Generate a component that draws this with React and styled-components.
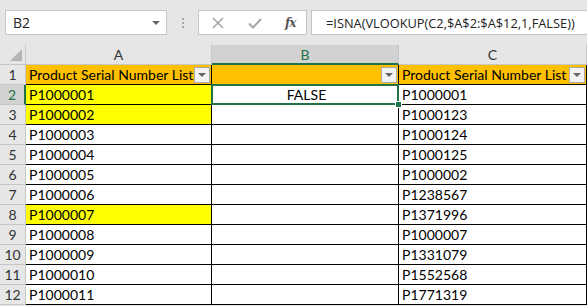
import React from 'react';
import styled, { createGlobalStyle } from 'styled-components';

const Global = createGlobalStyle`
  html, body { margin: 0; padding: 0; background: #e6e6e6; }
  body { width: 587px; height: 306px; overflow: hidden; }
`;

const Page = styled.div`
  width: 587px;
  height: 306px;
  overflow: hidden;
  background: #e6e6e6;
  font-family: Lato, "Liberation Sans", sans-serif;
`;

const FormulaBar = styled.div`
  display: flex;
  align-items: center;
  height: 25px;
  padding: 10px 0 10px 5px;
`;

const NameBox = styled.div`
  box-sizing: border-box;
  flex-shrink: 0;
  width: 162px;
  height: 25px;
  background: #fff;
  border: 1px solid #c6c6c6;
  display: flex;
  align-items: center;
  justify-content: space-between;
  padding: 0 6px 0 7px;
  font-family: "Open Sans", sans-serif;
  font-size: 14px;
  color: #222;
`;

const Caret = styled.span`
  width: 0;
  height: 0;
  border-left: 4px solid transparent;
  border-right: 4px solid transparent;
  border-top: 4px solid #666;
`;

const Grip = styled.div`
  flex-shrink: 0;
  width: 31px;
  display: flex;
  flex-direction: column;
  align-items: center;
  gap: 2px;
  span {
    width: 2px;
    height: 2px;
    background: #a8a8a8;
  }
`;

const IconBox = styled.div`
  box-sizing: border-box;
  flex-shrink: 0;
  width: 109px;
  height: 25px;
  background: #fff;
  border: 1px solid #c6c6c6;
  display: flex;
  align-items: center;
  padding-left: 12px;
  gap: 22px;
`;

const Fx = styled.span`
  font-family: "DejaVu Serif", "Liberation Serif", serif;
  font-style: italic;
  font-weight: bold;
  font-size: 12px;
  color: #555;
  letter-spacing: -1px;
`;

const FormulaInput = styled.div`
  box-sizing: border-box;
  flex: 1;
  min-width: 0;
  margin-left: 4px;
  height: 25px;
  background: #fff;
  border: 1px solid #c6c6c6;
  border-right: none;
  display: flex;
  align-items: center;
  padding-left: 14px;
  font-family: "Open Sans", sans-serif;
  font-size: 12.8px;
  color: #222;
  white-space: nowrap;
  overflow: hidden;
`;

const Sheet = styled.div`
  display: grid;
  grid-template-columns: 26px 186px 187px 188px;
  grid-auto-rows: 20px;
`;

const Corner = styled.div`
  box-sizing: border-box;
  background: #e6e6e6;
  border-right: 1px solid #c6c6c6;
  border-bottom: 1px solid #c6c6c6;
  position: relative;
  &::after {
    content: '';
    position: absolute;
    right: 3px;
    bottom: 3px;
    width: 0;
    height: 0;
    border-left: 12px solid transparent;
    border-bottom: 12px solid #b4b4b4;
  }
`;

const ColHead = styled.div`
  box-sizing: border-box;
  display: flex;
  align-items: center;
  justify-content: center;
  background: ${p => (p.$active ? '#d2d2d2' : '#e6e6e6')};
  border-right: 1px solid #c6c6c6;
  border-bottom: ${p => (p.$active ? '2px solid #217346' : '1px solid #c6c6c6')};
  color: ${p => (p.$active ? '#217346' : '#333')};
  font-size: 14px;
`;

const RowHead = styled.div`
  box-sizing: border-box;
  display: flex;
  align-items: center;
  justify-content: center;
  background: ${p => (p.$active ? '#d2d2d2' : '#e6e6e6')};
  border-bottom: 1px solid #c6c6c6;
  border-right: ${p => (p.$active ? '2px solid #217346' : '1px solid #c6c6c6')};
  color: ${p => (p.$active ? '#217346' : '#333')};
  font-size: 14px;
`;

const Cell = styled.div`
  box-sizing: border-box;
  position: relative;
  display: flex;
  align-items: center;
  justify-content: ${p => (p.$center ? 'center' : 'flex-start')};
  padding-left: 3px;
  background: ${p => p.$fill || '#fff'};
  border-right: 1px solid #000;
  border-bottom: 1px solid #000;
  color: #000;
  font-size: 14px;
  white-space: nowrap;
  overflow: visible;
`;

const Selection = styled.div`
  position: absolute;
  left: -1px;
  top: -1px;
  right: -1px;
  bottom: -1px;
  border: 2px solid #217346;
  pointer-events: none;
  z-index: 2;
  &::after {
    content: '';
    position: absolute;
    right: -5px;
    bottom: -5px;
    width: 5px;
    height: 5px;
    background: #217346;
    border: 1px solid #fff;
  }
`;

const FilterButton = styled.span`
  box-sizing: border-box;
  position: absolute;
  right: 1px;
  top: 2px;
  width: 16px;
  height: 16px;
  background: #f3f3f3;
  border: 1px solid #ababab;
  display: flex;
  align-items: center;
  justify-content: center;
  &::before {
    content: '';
    width: 0;
    height: 0;
    border-left: 4px solid transparent;
    border-right: 4px solid transparent;
    border-top: 4px solid #666;
  }
`;

const colA = ['P1000001', 'P1000002', 'P1000003', 'P1000004', 'P1000005', 'P1000006', 'P1000007', 'P1000008', 'P1000009', 'P1000010', 'P1000011'];
const colC = ['P1000001', 'P1000123', 'P1000124', 'P1000125', 'P1000002', 'P1238567', 'P1371996', 'P1000007', 'P1331079', 'P1552568', 'P1771319'];
const yellowRows = [0, 1, 6];

const Cross = () => (
  <svg width="14" height="14" viewBox="0 0 14 14">
    <path d="M2 2 L12 12 M12 2 L2 12" stroke="#a6a6a6" strokeWidth="1.6" fill="none" />
  </svg>
);

const Check = () => (
  <svg width="16" height="14" viewBox="0 0 16 14">
    <path d="M2 7.5 L6 11.5 L14 3" stroke="#a6a6a6" strokeWidth="2" fill="none" />
  </svg>
);

export default function App() {
  return (
    <Page>
      <Global />
      <FormulaBar>
        <NameBox>
          B2
          <Caret />
        </NameBox>
        <Grip>
          <span />
          <span />
          <span />
        </Grip>
        <IconBox>
          <Cross />
          <Check />
          <Fx>fx</Fx>
        </IconBox>
        <FormulaInput>=ISNA(VLOOKUP(C2,$A$2:$A$12,1,FALSE))</FormulaInput>
      </FormulaBar>
      <Sheet>
        <Corner />
        <ColHead>A</ColHead>
        <ColHead $active>B</ColHead>
        <ColHead>C</ColHead>

        <RowHead>1</RowHead>
        <Cell $fill="#ffc000">
          Product Serial Number List
          <FilterButton />
        </Cell>
        <Cell $fill="#ffc000">
          <FilterButton />
        </Cell>
        <Cell $fill="#ffc000">
          Product Serial Number List
          <FilterButton />
        </Cell>

        {colA.map((a, i) => (
          <React.Fragment key={a}>
            <RowHead $active={i === 0}>{i + 2}</RowHead>
            <Cell $fill={yellowRows.includes(i) ? '#ffff00' : null}>{a}</Cell>
            <Cell $center>
              {i === 0 && 'FALSE'}
              {i === 0 && <Selection />}
            </Cell>
            <Cell>{colC[i]}</Cell>
          </React.Fragment>
        ))}
      </Sheet>
    </Page>
  );
}
